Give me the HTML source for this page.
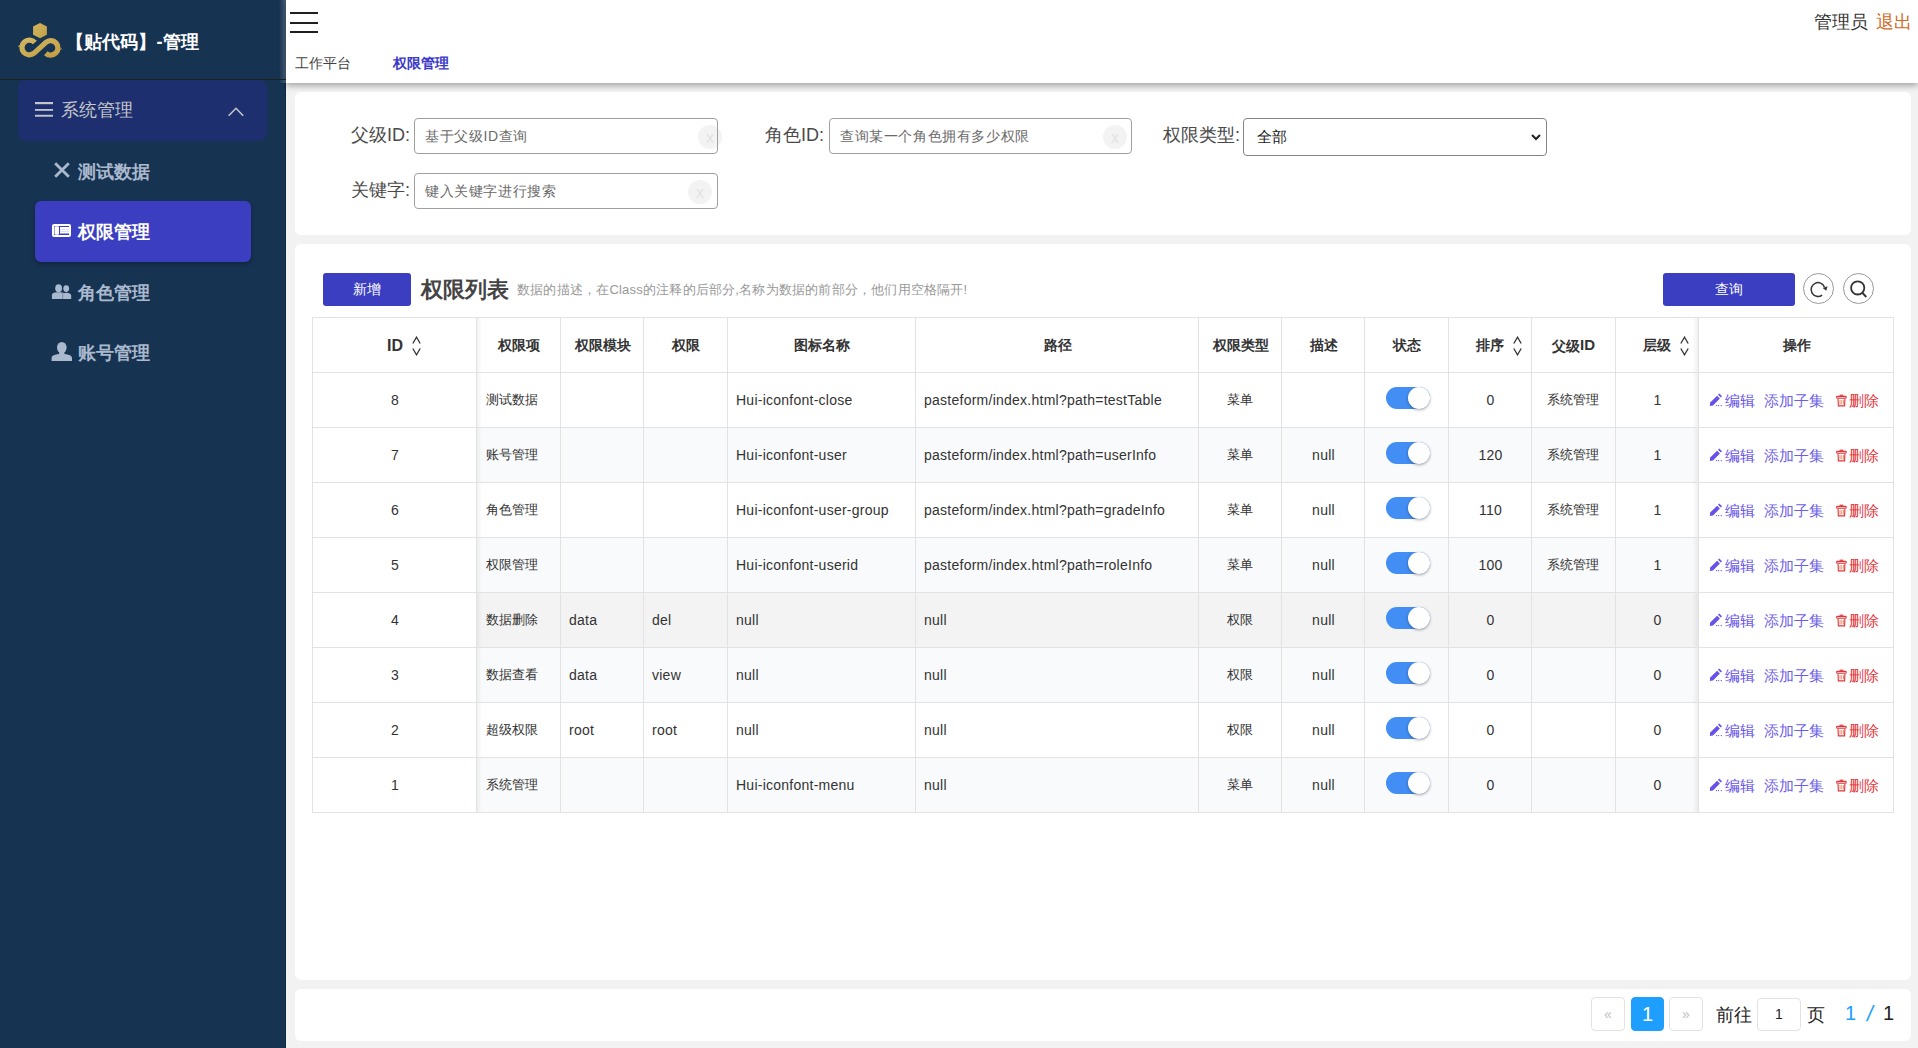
<!DOCTYPE html><html><head><meta charset="utf-8"><style>
*{margin:0;padding:0;box-sizing:border-box}
html,body{width:1918px;height:1048px;overflow:hidden}
body{background:#f2f2f2;font-family:"Liberation Sans",sans-serif;position:relative;color:#333}
.a{position:absolute;white-space:nowrap}
.side{position:absolute;left:0;top:0;width:286px;height:1048px;background:#173352}
.hdr{position:absolute;left:286px;top:0;width:1632px;height:83px;background:#fff;box-shadow:0 3px 6px rgba(0,0,0,.3)}
.card{position:absolute;background:#fff;border-radius:6px}
.lbl{font-size:18px;color:#4a4a4a}
.inp{position:absolute;height:36px;border:1px solid transparent;border-radius:4px;background:#fff}
.inp::after{content:"";position:absolute;left:-1px;top:-1px;right:-1px;bottom:-1px;border:1px solid #a0a0a0;border-radius:4px}
.sel::after{border-color:#858585}
.ph{position:absolute;left:10px;top:9px;font-size:14px;color:#6a6a6a;white-space:nowrap;letter-spacing:.6px}
.clr{position:absolute;width:24px;height:24px;border-radius:50%;background:#f3f3f3;color:#e2e2e2;font-size:16px;text-align:center;line-height:26px}
.th{font-size:14px;font-weight:bold;color:#333}
.thl{font-size:15px;font-weight:bold;color:#333}
.td{font-size:13px;color:#333}
.tl{font-size:14px;color:#333;letter-spacing:.25px}
.vl{position:absolute;width:1px;background:#e2e2e2}
.hl{position:absolute;height:1px;background:#e2e2e2}
.tog{position:absolute;width:44px;height:22px;border-radius:11px;background:#428ef4}
.tog i{position:absolute;right:0;top:0;width:22px;height:22px;border-radius:50%;background:#fff;box-shadow:0 1px 3px rgba(0,0,0,.35)}
.pg{position:absolute;width:34px;height:34px;border:1px solid #e2e2e2;border-radius:4px;background:#fff;text-align:center;line-height:32px;color:#c0c0c0;font-size:14px}
.circ{position:absolute;width:31px;height:31px;border:1px solid #9a9a9a;border-radius:50%;background:#fff}
</style></head><body>
<div class="side"></div>
<div class="a" style="left:279px;top:0;width:7px;height:83px;background:linear-gradient(to right,rgba(255,255,255,0),rgba(255,255,255,.22))"></div>
<div class="a" style="left:285px;top:83px;width:1px;height:965px;background:#0e2744"></div>
<svg class="a" style="left:14px;top:18px" width="54" height="46" viewBox="0 0 54 46">
<defs><linearGradient id="g" x1="0" y1="0" x2="1" y2="1"><stop offset="0" stop-color="#d4b761"/><stop offset="1" stop-color="#c09e45"/></linearGradient></defs>
<polygon points="26,5 32.9,8.5 32.9,16.7 26,20.2 19.1,16.7 19.1,8.5" fill="url(#g)"/>
<path d="M20.9,24.6 A7.4,7.4 0 1 0 20.2,35.1 L31.9,24.4 A7.25,7.25 0 1 1 31.8,35.2" stroke="url(#g)" stroke-width="5.3" fill="none"/>
<path d="M4,28.8 Q7,25 13.2,24.6" stroke="#c9aa52" stroke-width="0.9" fill="none"/>
<path d="M47.8,30.5 Q45,34.5 38.5,34.8" stroke="#c9aa52" stroke-width="0.9" fill="none"/>
</svg>
<div class="a" style="left:65.5px;top:30px;font-size:18px;font-weight:900;color:#fff;letter-spacing:.2px">【贴代码】-管理</div>
<div class="a" style="left:0;top:79px;width:286px;height:1px;background:#231f1c"></div>
<div class="a" style="left:18px;top:80px;width:249px;height:61px;background:#1d2f6e;border-radius:8px"></div>
<svg class="a" style="left:35px;top:101px" width="18" height="17"><rect x="0" y="1" width="18" height="2.2" fill="#c4c6cc"/><rect x="0" y="8" width="18" height="1.8" fill="#c4c6cc"/><rect x="0" y="13.8" width="18" height="1.9" fill="#c4c6cc"/></svg>
<div class="a" style="left:61px;top:98px;font-size:18px;color:#c4c6cc">系统管理</div>
<svg class="a" style="left:226px;top:105px" width="20" height="14"><path d="M2.6,10.8 L10,3.3 L17.2,10.8" stroke="#c4c6cc" stroke-width="1.6" fill="none"/></svg>
<svg class="a" style="left:53px;top:161px" width="18" height="18"><path d="M2.2,2.2 L15.8,15.8 M15.8,2.2 L2.2,15.8" stroke="#aab9cd" stroke-width="2.8"/></svg>
<div class="a" style="left:78px;top:160px;font-size:18px;font-weight:900;color:#aab9cd">测试数据</div>
<div class="a" style="left:35px;top:201px;width:216px;height:61px;background:#3c3ec1;border-radius:6px;box-shadow:0 2px 4px rgba(0,0,0,.3)"></div>
<svg class="a" style="left:52px;top:224px" width="19" height="13" viewBox="0 0 19 13"><rect x="0" y="0" width="19" height="13" rx="2" fill="#fff"/><rect x="2" y="2" width="15" height="9" fill="#3c3ec1"/><rect x="2.5" y="2.3" width="4.5" height="8.4" rx="1" fill="#fff"/><rect x="8" y="3" width="9" height="6.5" fill="#fff"/><rect x="8" y="5" width="9" height="0.6" fill="#c8c8f0"/><rect x="8" y="7" width="9" height="0.6" fill="#c8c8f0"/></svg>
<div class="a" style="left:78px;top:220px;font-size:18px;font-weight:900;color:#fff">权限管理</div>
<svg class="a" style="left:51px;top:283px" width="21" height="17" viewBox="0 0 21 17"><ellipse cx="7.6" cy="5.2" rx="3.4" ry="3.9" fill="#aab9cd"/><path d="M0.9,16 L0.9,12.5 C0.9,10 3,9.3 7.6,9.3 C12.2,9.3 14,10 14,12.5 L14,16 Z" fill="#aab9cd"/><ellipse cx="15.2" cy="5.6" rx="2.9" ry="3.4" fill="#aab9cd"/><path d="M12,16 L12,12.5 C12,10.6 13,9.8 15.2,9.8 C18,9.8 20.2,10.6 20.2,12.8 L20.2,16 Z" fill="#aab9cd"/><rect x="11.3" y="10" width="0.8" height="6" fill="#6f84a0"/></svg>
<div class="a" style="left:78px;top:281px;font-size:18px;font-weight:900;color:#aab9cd">角色管理</div>
<svg class="a" style="left:51px;top:341px" width="22" height="21" viewBox="0 0 22 21"><ellipse cx="10.8" cy="6.6" rx="4.8" ry="5.7" fill="#aab9cd"/><path d="M8.5,11 L13.1,11 L13.6,13 C18,13.8 21,14.5 21,17 L21,20 L0.6,20 L0.6,17 C0.6,14.5 3.6,13.8 8,13 Z" fill="#aab9cd"/></svg>
<div class="a" style="left:78px;top:341px;font-size:18px;font-weight:900;color:#aab9cd">账号管理</div>
<div class="hdr"></div>
<svg class="a" style="left:290px;top:12px" width="28" height="22"><rect x="0" y="0" width="28" height="2" fill="#1f1f1f"/><rect x="0" y="10" width="28" height="2" fill="#1f1f1f"/><rect x="0" y="19" width="28" height="2" fill="#1f1f1f"/></svg>
<div class="a" style="left:295px;top:55px;font-size:14px;color:#444">工作平台</div>
<div class="a" style="left:393px;top:55px;font-size:14px;color:#3a39c8;font-weight:bold">权限管理</div>
<div class="a" style="left:1814px;top:10px;font-size:18px;color:#333">管理员</div>
<div class="a" style="left:1876px;top:10px;font-size:18px;color:#cf6a1c">退出</div>
<div class="card" style="left:295px;top:92px;width:1616px;height:143px"></div>
<div class="a lbl" style="left:351px;top:123px">父级ID:</div>
<div class="inp" style="left:414px;top:118px;width:304px"><span class="ph">基于父级ID查询</span><span class="clr" style="left:283px;top:6px">x</span></div>
<div class="a lbl" style="left:765px;top:123px">角色ID:</div>
<div class="inp" style="left:829px;top:118px;width:303px"><span class="ph">查询某一个角色拥有多少权限</span><span class="clr" style="left:273px;top:6px">x</span></div>
<div class="a lbl" style="left:1163px;top:123px">权限类型:</div>
<div class="inp sel" style="left:1243px;top:118px;width:304px;height:38px"><span class="a" style="left:13px;top:9px;font-size:15px;color:#222">全部</span><svg class="a" style="left:287px;top:15px" width="10" height="7"><path d="M1,1 L5,5 L9,1" stroke="#222" stroke-width="2" fill="none"/></svg></div>
<div class="a lbl" style="left:351px;top:178px">关键字:</div>
<div class="inp" style="left:414px;top:173px;width:304px"><span class="ph">键入关键字进行搜索</span><span class="clr" style="left:273px;top:6px">x</span></div>
<div class="card" style="left:295px;top:244px;width:1616px;height:736px"></div>
<div class="a" style="left:323px;top:273px;width:88px;height:33px;background:#3c3ec1;border-radius:3px;color:#fff;font-size:14px;text-align:center;line-height:32px">新增</div>
<div class="a" style="left:421px;top:275px;font-size:22px;font-weight:bold;color:#444">权限列表</div>
<div class="a" style="left:517px;top:281px;font-size:13px;color:#999;letter-spacing:.2px">数据的描述，在Class的注释的后部分,名称为数据的前部分，他们用空格隔开!</div>
<div class="a" style="left:1663px;top:273px;width:132px;height:33px;background:#3c3ec1;border-radius:3px;color:#fff;font-size:14px;text-align:center;line-height:32px">查询</div>
<div class="circ" style="left:1803px;top:273px"></div>
<svg class="a" style="left:1803px;top:273px" width="31" height="31" viewBox="0 0 31 31"><path d="M19.1,22.1 A6.9,6.9 0 1 1 21.5,14.2" stroke="#333" stroke-width="1.5" fill="none"/><path d="M19.7,14.9 L24.6,13.3 L23.2,17.8 Z" fill="#333"/></svg>
<div class="circ" style="left:1843px;top:273px"></div>
<svg class="a" style="left:1843px;top:273px" width="31" height="31" viewBox="0 0 31 31"><circle cx="14.7" cy="14.9" r="6.6" stroke="#333" stroke-width="1.8" fill="none"/><path d="M19.2,19.6 L23.3,24" stroke="#333" stroke-width="1.9"/></svg>
<div class="a" style="left:476px;top:372px;width:1222px;height:55px;background:#fff"></div>
<div class="a" style="left:476px;top:427px;width:1222px;height:55px;background:#f9fafc"></div>
<div class="a" style="left:476px;top:482px;width:1222px;height:55px;background:#fff"></div>
<div class="a" style="left:476px;top:537px;width:1222px;height:55px;background:#f9fafc"></div>
<div class="a" style="left:476px;top:592px;width:1222px;height:55px;background:#f3f3f3"></div>
<div class="a" style="left:476px;top:647px;width:1222px;height:55px;background:#f9fafc"></div>
<div class="a" style="left:476px;top:702px;width:1222px;height:55px;background:#fff"></div>
<div class="a" style="left:476px;top:757px;width:1222px;height:55px;background:#f9fafc"></div>
<div class="a" style="left:476px;top:317px;width:6px;height:495px;background:linear-gradient(to right,rgba(0,0,0,.06),rgba(0,0,0,0))"></div>
<div class="a" style="left:1692px;top:317px;width:6px;height:495px;background:linear-gradient(to left,rgba(0,0,0,.06),rgba(0,0,0,0))"></div>
<div class="vl" style="left:312px;top:317px;height:496px"></div>
<div class="vl" style="left:476px;top:317px;height:496px"></div>
<div class="vl" style="left:560px;top:317px;height:496px"></div>
<div class="vl" style="left:643px;top:317px;height:496px"></div>
<div class="vl" style="left:727px;top:317px;height:496px"></div>
<div class="vl" style="left:915px;top:317px;height:496px"></div>
<div class="vl" style="left:1198px;top:317px;height:496px"></div>
<div class="vl" style="left:1281px;top:317px;height:496px"></div>
<div class="vl" style="left:1364px;top:317px;height:496px"></div>
<div class="vl" style="left:1448px;top:317px;height:496px"></div>
<div class="vl" style="left:1531px;top:317px;height:496px"></div>
<div class="vl" style="left:1615px;top:317px;height:496px"></div>
<div class="vl" style="left:1698px;top:317px;height:496px"></div>
<div class="vl" style="left:1893px;top:317px;height:496px"></div>
<div class="hl" style="left:312px;top:317px;width:1582px"></div>
<div class="hl" style="left:312px;top:372px;width:1582px"></div>
<div class="hl" style="left:312px;top:427px;width:1582px"></div>
<div class="hl" style="left:312px;top:482px;width:1582px"></div>
<div class="hl" style="left:312px;top:537px;width:1582px"></div>
<div class="hl" style="left:312px;top:592px;width:1582px"></div>
<div class="hl" style="left:312px;top:647px;width:1582px"></div>
<div class="hl" style="left:312px;top:702px;width:1582px"></div>
<div class="hl" style="left:312px;top:757px;width:1582px"></div>
<div class="hl" style="left:312px;top:812px;width:1582px"></div>
<div class="a" style="left:387px;top:337px;font-size:16px;font-weight:bold;color:#333">ID</div>
<svg class="a" style="left:412px;top:336px" width="9" height="20" viewBox="0 0 9 20"><path d="M0.8,7.5 L4.5,1.2 L8.2,7.5 M0.8,12.5 L4.5,18.8 L8.2,12.5" stroke="#333" stroke-width="1.3" fill="none"/></svg>
<div class="a th" style="left:477px;width:84px;text-align:center;top:337px">权限项</div>
<div class="a th" style="left:561px;width:83px;text-align:center;top:337px">权限模块</div>
<div class="a th" style="left:644px;width:84px;text-align:center;top:337px">权限</div>
<div class="a th" style="left:728px;width:188px;text-align:center;top:337px">图标名称</div>
<div class="a th" style="left:916px;width:283px;text-align:center;top:337px">路径</div>
<div class="a th" style="left:1199px;width:83px;text-align:center;top:337px">权限类型</div>
<div class="a th" style="left:1282px;width:83px;text-align:center;top:337px">描述</div>
<div class="a th" style="left:1365px;width:84px;text-align:center;top:337px">状态</div>
<div class="a th" style="left:1476px;top:337px">排序</div>
<svg class="a" style="left:1513px;top:336px" width="9" height="20" viewBox="0 0 9 20"><path d="M0.8,7.5 L4.5,1.2 L8.2,7.5 M0.8,12.5 L4.5,18.8 L8.2,12.5" stroke="#333" stroke-width="1.3" fill="none"/></svg>
<div class="a th" style="left:1552px;top:337px">父级<span class="thl" style="position:relative;top:-1px">ID</span></div>
<div class="a th" style="left:1643px;top:337px">层级</div>
<svg class="a" style="left:1680px;top:336px" width="9" height="20" viewBox="0 0 9 20"><path d="M0.8,7.5 L4.5,1.2 L8.2,7.5 M0.8,12.5 L4.5,18.8 L8.2,12.5" stroke="#333" stroke-width="1.3" fill="none"/></svg>
<div class="a th" style="left:1699px;width:195px;text-align:center;top:337px">操作</div>
<div class="a tl" style="left:313px;width:164px;text-align:center;top:392px">8</div>
<div class="a td" style="left:486px;top:391px">测试数据</div>
<div class="a tl" style="left:736px;top:392px">Hui-iconfont-close</div>
<div class="a tl" style="left:924px;top:392px">pasteform/index.html?path=testTable</div>
<div class="a td" style="left:1198px;width:83px;text-align:center;top:391px">菜单</div>
<div class="a tl" style="left:1449px;width:83px;text-align:center;top:392px">0</div>
<div class="a td" style="left:1531px;width:84px;text-align:center;top:391px">系统管理</div>
<div class="a tl" style="left:1616px;width:83px;text-align:center;top:392px">1</div>
<div class="tog" style="left:1386px;top:387px"><i></i></div>
<svg class="a" style="left:1708px;top:393px" width="16" height="14" viewBox="0 0 16 14"><path d="M1.8,12.9 L2.2,9.6 L9.1,2.7 L11.9,5.4 L5,12.4 Z" fill="#6652e8"/><path d="M10,1.8 L11.2,0.6 L14,3.3 L12.8,4.5 Z" fill="#6652e8"/><circle cx="8.5" cy="12.6" r=".7" fill="#6652e8"/><circle cx="10.5" cy="12.6" r=".7" fill="#6652e8"/><circle cx="13.3" cy="12.6" r=".7" fill="#6652e8"/></svg>
<div class="a" style="left:1725px;top:392px;font-size:15px;color:#6652e8">编辑</div>
<div class="a" style="left:1764px;top:392px;font-size:15px;color:#6d5ee8">添加子集</div>
<svg class="a" style="left:1834.5px;top:393.5px" width="12" height="13" viewBox="0 0 13 14"><path d="M5,1.3 L8.9,1.3" stroke="#e3343a" stroke-width="1.3"/><rect x="1.8" y="2.5" width="10.3" height="2.1" rx=".8" stroke="#e3343a" stroke-width="1.2" fill="#fde8e8"/><path d="M3.3,5.4 L3.6,12.8 L10.4,12.8 L10.7,5.4" stroke="#e3343a" stroke-width="1.2" fill="none"/><rect x="5" y="6.5" width=".9" height="4.8" fill="#ec7f5a"/><rect x="6.9" y="6.5" width=".9" height="4.8" fill="#ec7f5a"/><rect x="8.8" y="6.5" width=".9" height="4.8" fill="#ec7f5a"/></svg>
<div class="a" style="left:1849px;top:392px;font-size:15px;color:#e3343a">删除</div>
<div class="a tl" style="left:313px;width:164px;text-align:center;top:447px">7</div>
<div class="a td" style="left:486px;top:446px">账号管理</div>
<div class="a tl" style="left:736px;top:447px">Hui-iconfont-user</div>
<div class="a tl" style="left:924px;top:447px">pasteform/index.html?path=userInfo</div>
<div class="a td" style="left:1198px;width:83px;text-align:center;top:446px">菜单</div>
<div class="a tl" style="left:1282px;width:83px;text-align:center;top:447px">null</div>
<div class="a tl" style="left:1449px;width:83px;text-align:center;top:447px">120</div>
<div class="a td" style="left:1531px;width:84px;text-align:center;top:446px">系统管理</div>
<div class="a tl" style="left:1616px;width:83px;text-align:center;top:447px">1</div>
<div class="tog" style="left:1386px;top:442px"><i></i></div>
<svg class="a" style="left:1708px;top:448px" width="16" height="14" viewBox="0 0 16 14"><path d="M1.8,12.9 L2.2,9.6 L9.1,2.7 L11.9,5.4 L5,12.4 Z" fill="#6652e8"/><path d="M10,1.8 L11.2,0.6 L14,3.3 L12.8,4.5 Z" fill="#6652e8"/><circle cx="8.5" cy="12.6" r=".7" fill="#6652e8"/><circle cx="10.5" cy="12.6" r=".7" fill="#6652e8"/><circle cx="13.3" cy="12.6" r=".7" fill="#6652e8"/></svg>
<div class="a" style="left:1725px;top:447px;font-size:15px;color:#6652e8">编辑</div>
<div class="a" style="left:1764px;top:447px;font-size:15px;color:#6d5ee8">添加子集</div>
<svg class="a" style="left:1834.5px;top:448.5px" width="12" height="13" viewBox="0 0 13 14"><path d="M5,1.3 L8.9,1.3" stroke="#e3343a" stroke-width="1.3"/><rect x="1.8" y="2.5" width="10.3" height="2.1" rx=".8" stroke="#e3343a" stroke-width="1.2" fill="#fde8e8"/><path d="M3.3,5.4 L3.6,12.8 L10.4,12.8 L10.7,5.4" stroke="#e3343a" stroke-width="1.2" fill="none"/><rect x="5" y="6.5" width=".9" height="4.8" fill="#ec7f5a"/><rect x="6.9" y="6.5" width=".9" height="4.8" fill="#ec7f5a"/><rect x="8.8" y="6.5" width=".9" height="4.8" fill="#ec7f5a"/></svg>
<div class="a" style="left:1849px;top:447px;font-size:15px;color:#e3343a">删除</div>
<div class="a tl" style="left:313px;width:164px;text-align:center;top:502px">6</div>
<div class="a td" style="left:486px;top:501px">角色管理</div>
<div class="a tl" style="left:736px;top:502px">Hui-iconfont-user-group</div>
<div class="a tl" style="left:924px;top:502px">pasteform/index.html?path=gradeInfo</div>
<div class="a td" style="left:1198px;width:83px;text-align:center;top:501px">菜单</div>
<div class="a tl" style="left:1282px;width:83px;text-align:center;top:502px">null</div>
<div class="a tl" style="left:1449px;width:83px;text-align:center;top:502px">110</div>
<div class="a td" style="left:1531px;width:84px;text-align:center;top:501px">系统管理</div>
<div class="a tl" style="left:1616px;width:83px;text-align:center;top:502px">1</div>
<div class="tog" style="left:1386px;top:497px"><i></i></div>
<svg class="a" style="left:1708px;top:503px" width="16" height="14" viewBox="0 0 16 14"><path d="M1.8,12.9 L2.2,9.6 L9.1,2.7 L11.9,5.4 L5,12.4 Z" fill="#6652e8"/><path d="M10,1.8 L11.2,0.6 L14,3.3 L12.8,4.5 Z" fill="#6652e8"/><circle cx="8.5" cy="12.6" r=".7" fill="#6652e8"/><circle cx="10.5" cy="12.6" r=".7" fill="#6652e8"/><circle cx="13.3" cy="12.6" r=".7" fill="#6652e8"/></svg>
<div class="a" style="left:1725px;top:502px;font-size:15px;color:#6652e8">编辑</div>
<div class="a" style="left:1764px;top:502px;font-size:15px;color:#6d5ee8">添加子集</div>
<svg class="a" style="left:1834.5px;top:503.5px" width="12" height="13" viewBox="0 0 13 14"><path d="M5,1.3 L8.9,1.3" stroke="#e3343a" stroke-width="1.3"/><rect x="1.8" y="2.5" width="10.3" height="2.1" rx=".8" stroke="#e3343a" stroke-width="1.2" fill="#fde8e8"/><path d="M3.3,5.4 L3.6,12.8 L10.4,12.8 L10.7,5.4" stroke="#e3343a" stroke-width="1.2" fill="none"/><rect x="5" y="6.5" width=".9" height="4.8" fill="#ec7f5a"/><rect x="6.9" y="6.5" width=".9" height="4.8" fill="#ec7f5a"/><rect x="8.8" y="6.5" width=".9" height="4.8" fill="#ec7f5a"/></svg>
<div class="a" style="left:1849px;top:502px;font-size:15px;color:#e3343a">删除</div>
<div class="a tl" style="left:313px;width:164px;text-align:center;top:557px">5</div>
<div class="a td" style="left:486px;top:556px">权限管理</div>
<div class="a tl" style="left:736px;top:557px">Hui-iconfont-userid</div>
<div class="a tl" style="left:924px;top:557px">pasteform/index.html?path=roleInfo</div>
<div class="a td" style="left:1198px;width:83px;text-align:center;top:556px">菜单</div>
<div class="a tl" style="left:1282px;width:83px;text-align:center;top:557px">null</div>
<div class="a tl" style="left:1449px;width:83px;text-align:center;top:557px">100</div>
<div class="a td" style="left:1531px;width:84px;text-align:center;top:556px">系统管理</div>
<div class="a tl" style="left:1616px;width:83px;text-align:center;top:557px">1</div>
<div class="tog" style="left:1386px;top:552px"><i></i></div>
<svg class="a" style="left:1708px;top:558px" width="16" height="14" viewBox="0 0 16 14"><path d="M1.8,12.9 L2.2,9.6 L9.1,2.7 L11.9,5.4 L5,12.4 Z" fill="#6652e8"/><path d="M10,1.8 L11.2,0.6 L14,3.3 L12.8,4.5 Z" fill="#6652e8"/><circle cx="8.5" cy="12.6" r=".7" fill="#6652e8"/><circle cx="10.5" cy="12.6" r=".7" fill="#6652e8"/><circle cx="13.3" cy="12.6" r=".7" fill="#6652e8"/></svg>
<div class="a" style="left:1725px;top:557px;font-size:15px;color:#6652e8">编辑</div>
<div class="a" style="left:1764px;top:557px;font-size:15px;color:#6d5ee8">添加子集</div>
<svg class="a" style="left:1834.5px;top:558.5px" width="12" height="13" viewBox="0 0 13 14"><path d="M5,1.3 L8.9,1.3" stroke="#e3343a" stroke-width="1.3"/><rect x="1.8" y="2.5" width="10.3" height="2.1" rx=".8" stroke="#e3343a" stroke-width="1.2" fill="#fde8e8"/><path d="M3.3,5.4 L3.6,12.8 L10.4,12.8 L10.7,5.4" stroke="#e3343a" stroke-width="1.2" fill="none"/><rect x="5" y="6.5" width=".9" height="4.8" fill="#ec7f5a"/><rect x="6.9" y="6.5" width=".9" height="4.8" fill="#ec7f5a"/><rect x="8.8" y="6.5" width=".9" height="4.8" fill="#ec7f5a"/></svg>
<div class="a" style="left:1849px;top:557px;font-size:15px;color:#e3343a">删除</div>
<div class="a tl" style="left:313px;width:164px;text-align:center;top:612px">4</div>
<div class="a td" style="left:486px;top:611px">数据删除</div>
<div class="a tl" style="left:569px;top:612px">data</div>
<div class="a tl" style="left:652px;top:612px">del</div>
<div class="a tl" style="left:736px;top:612px">null</div>
<div class="a tl" style="left:924px;top:612px">null</div>
<div class="a td" style="left:1198px;width:83px;text-align:center;top:611px">权限</div>
<div class="a tl" style="left:1282px;width:83px;text-align:center;top:612px">null</div>
<div class="a tl" style="left:1449px;width:83px;text-align:center;top:612px">0</div>
<div class="a tl" style="left:1616px;width:83px;text-align:center;top:612px">0</div>
<div class="tog" style="left:1386px;top:607px"><i></i></div>
<svg class="a" style="left:1708px;top:613px" width="16" height="14" viewBox="0 0 16 14"><path d="M1.8,12.9 L2.2,9.6 L9.1,2.7 L11.9,5.4 L5,12.4 Z" fill="#6652e8"/><path d="M10,1.8 L11.2,0.6 L14,3.3 L12.8,4.5 Z" fill="#6652e8"/><circle cx="8.5" cy="12.6" r=".7" fill="#6652e8"/><circle cx="10.5" cy="12.6" r=".7" fill="#6652e8"/><circle cx="13.3" cy="12.6" r=".7" fill="#6652e8"/></svg>
<div class="a" style="left:1725px;top:612px;font-size:15px;color:#6652e8">编辑</div>
<div class="a" style="left:1764px;top:612px;font-size:15px;color:#6d5ee8">添加子集</div>
<svg class="a" style="left:1834.5px;top:613.5px" width="12" height="13" viewBox="0 0 13 14"><path d="M5,1.3 L8.9,1.3" stroke="#e3343a" stroke-width="1.3"/><rect x="1.8" y="2.5" width="10.3" height="2.1" rx=".8" stroke="#e3343a" stroke-width="1.2" fill="#fde8e8"/><path d="M3.3,5.4 L3.6,12.8 L10.4,12.8 L10.7,5.4" stroke="#e3343a" stroke-width="1.2" fill="none"/><rect x="5" y="6.5" width=".9" height="4.8" fill="#ec7f5a"/><rect x="6.9" y="6.5" width=".9" height="4.8" fill="#ec7f5a"/><rect x="8.8" y="6.5" width=".9" height="4.8" fill="#ec7f5a"/></svg>
<div class="a" style="left:1849px;top:612px;font-size:15px;color:#e3343a">删除</div>
<div class="a tl" style="left:313px;width:164px;text-align:center;top:667px">3</div>
<div class="a td" style="left:486px;top:666px">数据查看</div>
<div class="a tl" style="left:569px;top:667px">data</div>
<div class="a tl" style="left:652px;top:667px">view</div>
<div class="a tl" style="left:736px;top:667px">null</div>
<div class="a tl" style="left:924px;top:667px">null</div>
<div class="a td" style="left:1198px;width:83px;text-align:center;top:666px">权限</div>
<div class="a tl" style="left:1282px;width:83px;text-align:center;top:667px">null</div>
<div class="a tl" style="left:1449px;width:83px;text-align:center;top:667px">0</div>
<div class="a tl" style="left:1616px;width:83px;text-align:center;top:667px">0</div>
<div class="tog" style="left:1386px;top:662px"><i></i></div>
<svg class="a" style="left:1708px;top:668px" width="16" height="14" viewBox="0 0 16 14"><path d="M1.8,12.9 L2.2,9.6 L9.1,2.7 L11.9,5.4 L5,12.4 Z" fill="#6652e8"/><path d="M10,1.8 L11.2,0.6 L14,3.3 L12.8,4.5 Z" fill="#6652e8"/><circle cx="8.5" cy="12.6" r=".7" fill="#6652e8"/><circle cx="10.5" cy="12.6" r=".7" fill="#6652e8"/><circle cx="13.3" cy="12.6" r=".7" fill="#6652e8"/></svg>
<div class="a" style="left:1725px;top:667px;font-size:15px;color:#6652e8">编辑</div>
<div class="a" style="left:1764px;top:667px;font-size:15px;color:#6d5ee8">添加子集</div>
<svg class="a" style="left:1834.5px;top:668.5px" width="12" height="13" viewBox="0 0 13 14"><path d="M5,1.3 L8.9,1.3" stroke="#e3343a" stroke-width="1.3"/><rect x="1.8" y="2.5" width="10.3" height="2.1" rx=".8" stroke="#e3343a" stroke-width="1.2" fill="#fde8e8"/><path d="M3.3,5.4 L3.6,12.8 L10.4,12.8 L10.7,5.4" stroke="#e3343a" stroke-width="1.2" fill="none"/><rect x="5" y="6.5" width=".9" height="4.8" fill="#ec7f5a"/><rect x="6.9" y="6.5" width=".9" height="4.8" fill="#ec7f5a"/><rect x="8.8" y="6.5" width=".9" height="4.8" fill="#ec7f5a"/></svg>
<div class="a" style="left:1849px;top:667px;font-size:15px;color:#e3343a">删除</div>
<div class="a tl" style="left:313px;width:164px;text-align:center;top:722px">2</div>
<div class="a td" style="left:486px;top:721px">超级权限</div>
<div class="a tl" style="left:569px;top:722px">root</div>
<div class="a tl" style="left:652px;top:722px">root</div>
<div class="a tl" style="left:736px;top:722px">null</div>
<div class="a tl" style="left:924px;top:722px">null</div>
<div class="a td" style="left:1198px;width:83px;text-align:center;top:721px">权限</div>
<div class="a tl" style="left:1282px;width:83px;text-align:center;top:722px">null</div>
<div class="a tl" style="left:1449px;width:83px;text-align:center;top:722px">0</div>
<div class="a tl" style="left:1616px;width:83px;text-align:center;top:722px">0</div>
<div class="tog" style="left:1386px;top:717px"><i></i></div>
<svg class="a" style="left:1708px;top:723px" width="16" height="14" viewBox="0 0 16 14"><path d="M1.8,12.9 L2.2,9.6 L9.1,2.7 L11.9,5.4 L5,12.4 Z" fill="#6652e8"/><path d="M10,1.8 L11.2,0.6 L14,3.3 L12.8,4.5 Z" fill="#6652e8"/><circle cx="8.5" cy="12.6" r=".7" fill="#6652e8"/><circle cx="10.5" cy="12.6" r=".7" fill="#6652e8"/><circle cx="13.3" cy="12.6" r=".7" fill="#6652e8"/></svg>
<div class="a" style="left:1725px;top:722px;font-size:15px;color:#6652e8">编辑</div>
<div class="a" style="left:1764px;top:722px;font-size:15px;color:#6d5ee8">添加子集</div>
<svg class="a" style="left:1834.5px;top:723.5px" width="12" height="13" viewBox="0 0 13 14"><path d="M5,1.3 L8.9,1.3" stroke="#e3343a" stroke-width="1.3"/><rect x="1.8" y="2.5" width="10.3" height="2.1" rx=".8" stroke="#e3343a" stroke-width="1.2" fill="#fde8e8"/><path d="M3.3,5.4 L3.6,12.8 L10.4,12.8 L10.7,5.4" stroke="#e3343a" stroke-width="1.2" fill="none"/><rect x="5" y="6.5" width=".9" height="4.8" fill="#ec7f5a"/><rect x="6.9" y="6.5" width=".9" height="4.8" fill="#ec7f5a"/><rect x="8.8" y="6.5" width=".9" height="4.8" fill="#ec7f5a"/></svg>
<div class="a" style="left:1849px;top:722px;font-size:15px;color:#e3343a">删除</div>
<div class="a tl" style="left:313px;width:164px;text-align:center;top:777px">1</div>
<div class="a td" style="left:486px;top:776px">系统管理</div>
<div class="a tl" style="left:736px;top:777px">Hui-iconfont-menu</div>
<div class="a tl" style="left:924px;top:777px">null</div>
<div class="a td" style="left:1198px;width:83px;text-align:center;top:776px">菜单</div>
<div class="a tl" style="left:1282px;width:83px;text-align:center;top:777px">null</div>
<div class="a tl" style="left:1449px;width:83px;text-align:center;top:777px">0</div>
<div class="a tl" style="left:1616px;width:83px;text-align:center;top:777px">0</div>
<div class="tog" style="left:1386px;top:772px"><i></i></div>
<svg class="a" style="left:1708px;top:778px" width="16" height="14" viewBox="0 0 16 14"><path d="M1.8,12.9 L2.2,9.6 L9.1,2.7 L11.9,5.4 L5,12.4 Z" fill="#6652e8"/><path d="M10,1.8 L11.2,0.6 L14,3.3 L12.8,4.5 Z" fill="#6652e8"/><circle cx="8.5" cy="12.6" r=".7" fill="#6652e8"/><circle cx="10.5" cy="12.6" r=".7" fill="#6652e8"/><circle cx="13.3" cy="12.6" r=".7" fill="#6652e8"/></svg>
<div class="a" style="left:1725px;top:777px;font-size:15px;color:#6652e8">编辑</div>
<div class="a" style="left:1764px;top:777px;font-size:15px;color:#6d5ee8">添加子集</div>
<svg class="a" style="left:1834.5px;top:778.5px" width="12" height="13" viewBox="0 0 13 14"><path d="M5,1.3 L8.9,1.3" stroke="#e3343a" stroke-width="1.3"/><rect x="1.8" y="2.5" width="10.3" height="2.1" rx=".8" stroke="#e3343a" stroke-width="1.2" fill="#fde8e8"/><path d="M3.3,5.4 L3.6,12.8 L10.4,12.8 L10.7,5.4" stroke="#e3343a" stroke-width="1.2" fill="none"/><rect x="5" y="6.5" width=".9" height="4.8" fill="#ec7f5a"/><rect x="6.9" y="6.5" width=".9" height="4.8" fill="#ec7f5a"/><rect x="8.8" y="6.5" width=".9" height="4.8" fill="#ec7f5a"/></svg>
<div class="a" style="left:1849px;top:777px;font-size:15px;color:#e3343a">删除</div>
<div class="card" style="left:295px;top:989px;width:1616px;height:52px"></div>
<div class="pg" style="left:1591px;top:997px">«</div>
<div class="pg" style="left:1631px;top:997px;width:33px;background:#1e9fff;border-color:#1e9fff;color:#fff;font-size:20px">1</div>
<div class="pg" style="left:1669px;top:997px">»</div>
<div class="a" style="left:1716px;top:1003px;font-size:18px;color:#222">前往</div>
<div class="a" style="left:1757px;top:998px;width:44px;height:33px;border:1px solid #e2e2e2;border-radius:4px;text-align:center;line-height:31px;font-size:14px;color:#222">1</div>
<div class="a" style="left:1807px;top:1003px;font-size:18px;color:#222">页</div>
<div class="a" style="left:1845px;top:1002px;font-size:20px;color:#1e9fff">1</div>
<div class="a" style="left:1867px;top:1001px;font-size:22px;color:#1e9fff;transform:skewX(-10deg)">/</div>
<div class="a" style="left:1883px;top:1002px;font-size:20px;color:#222">1</div>
</body></html>
